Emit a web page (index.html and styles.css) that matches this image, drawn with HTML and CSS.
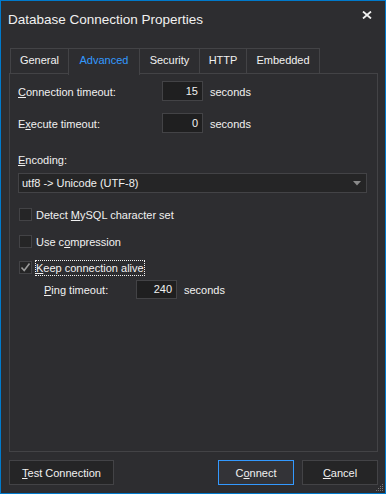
FILE: index.html
```html
<!DOCTYPE html>
<html>
    <head>
        <link rel="stylesheet" href="styles.css">
    </head>
    <body>
        <div class="window">
            <div class="title-bar">
                <span class="title">Database Connection Properties</span>
                <svg class="close" width="10" height="8" viewBox="0 0 10 8">
                    <path d="M1 0.5 L9 7.5 M9 0.5 L1 7.5" stroke="#f1f1f1" stroke-width="1.8" fill="none"/>
                </svg>
            </div>

            <div class="tabs">
                <div class="tab tab-general">General</div>
                <div class="tab tab-advanced active">Advanced</div>
                <div class="tab tab-security">Security</div>
                <div class="tab tab-http">HTTP</div>
                <div class="tab tab-embedded">Embedded</div>
            </div>

            <div class="panel">
                <div class="field-row first-row">
                    <label class="field-label"><u>C</u>onnection timeout:</label>
                    <div class="num-input">15</div>
                    <span class="unit">seconds</span>
                </div>

                <div class="field-row second-row">
                    <label class="field-label">E<u>x</u>ecute timeout:</label>
                    <div class="num-input">0</div>
                    <span class="unit">seconds</span>
                </div>

                <label class="encoding-label"><u>E</u>ncoding:</label>
                <div class="select">
                    <span>utf8 -&gt; Unicode (UTF-8)</span>
                    <svg width="8" height="5" viewBox="0 0 8 5">
                        <path d="M0 0 L8 0 L4 4.5 Z" fill="#8a8a8a"/>
                    </svg>
                </div>

                <div class="check-row check-detect">
                    <span class="checkbox"></span>
                    <span class="check-text">Detect <u>M</u>ySQL character set</span>
                </div>

                <div class="check-row check-compress">
                    <span class="checkbox"></span>
                    <span class="check-text">Use c<u>o</u>mpression</span>
                </div>

                <div class="check-row check-alive">
                    <span class="checkbox">
                        <svg width="11" height="11" viewBox="0 0 11 11">
                            <path d="M1.5 5.5 L4.2 8.5 L9.5 1.5" stroke="#9a9a9a" stroke-width="1.6" fill="none"/>
                        </svg>
                    </span>
                    <span class="check-text focused"><u>K</u>eep connection alive</span>
                </div>

                <div class="field-row ping-row">
                    <label class="field-label ping-label"><u>P</u>ing timeout:</label>
                    <div class="num-input">240</div>
                    <span class="unit">seconds</span>
                </div>
            </div>

            <div class="button-row">
                <button class="btn btn-test"><u>T</u>est Connection</button>
                <div class="spacer"></div>
                <button class="btn btn-connect">C<u>o</u>nnect</button>
                <button class="btn btn-cancel"><u>C</u>ancel</button>
            </div>

            <svg class="grip" width="8" height="8" viewBox="0 0 8 8">
                <rect x="6" y="0" width="1" height="1" fill="#777"/>
                <rect x="4" y="2" width="1" height="1" fill="#777"/>
                <rect x="6" y="2" width="1" height="1" fill="#777"/>
                <rect x="2" y="4" width="1" height="1" fill="#777"/>
                <rect x="4" y="4" width="1" height="1" fill="#777"/>
                <rect x="6" y="4" width="1" height="1" fill="#777"/>
                <rect x="0" y="6" width="1" height="1" fill="#777"/>
                <rect x="2" y="6" width="1" height="1" fill="#777"/>
                <rect x="4" y="6" width="1" height="1" fill="#777"/>
                <rect x="6" y="6" width="1" height="1" fill="#777"/>
            </svg>
        </div>
    </body>
</html>
```

FILE: styles.css
```css
body {
    margin: 0;
    font-family: "Liberation Sans", Arial, sans-serif;
    font-size: 11px;
    color: #f1f1f1;
    background-color: #2d2d30;
}

.window {
    position: relative;
    width: 386px;
    height: 494px;
    box-sizing: border-box;
    border: 1px solid #007acc;
    background-color: #2d2d30;
    display: flex;
    flex-direction: column;
}

.title-bar {
    height: 47px;
    display: flex;
    align-items: flex-start;
    justify-content: space-between;
    padding-left: 7px;
    padding-right: 13px;
}

.title {
    font-size: 13.5px;
    margin-top: 10px;
    line-height: 18px;
}

.close {
    margin-top: 10px;
}

.tabs {
    display: flex;
    height: 25px;
    margin-left: 9px;
}

.tab {
    position: relative;
    box-sizing: border-box;
    height: 26px;
    margin-left: -1px;
    border: 1px solid #434346;
    border-bottom: none;
    text-align: center;
    line-height: 22px;
}

.tab-general {
    margin-left: 0;
    width: 59px;
}

.tab-advanced {
    width: 72px;
}

.tab-security {
    width: 61px;
}

.tab-http {
    width: 48px;
}

.tab-embedded {
    width: 74px;
}

.tab.active {
    color: #3399ff;
    background-color: #2d2d30;
    height: 27px;
    z-index: 1;
}

.panel {
    height: 379px;
    box-sizing: border-box;
    margin-left: 8px;
    width: 369px;
    border: 1px solid #434346;
    padding: 7px 0 0 8px;
}

.field-row {
    display: flex;
    align-items: center;
    height: 20px;
}

.second-row {
    margin-top: 12px;
}

.field-label {
    width: 144px;
    padding-top: 1px;
}

.num-input {
    box-sizing: border-box;
    width: 41px;
    height: 20px;
    background-color: #1f1f20;
    border: 1px solid #434346;
    text-align: right;
    padding-right: 4px;
    line-height: 18px;
}

.unit {
    margin-left: 7px;
    padding-top: 1px;
}

.encoding-label {
    display: block;
    margin-top: 20px;
    line-height: 15px;
}

.select {
    box-sizing: border-box;
    margin-top: 5px;
    width: 349px;
    height: 20px;
    background-color: #252526;
    border: 1px solid #434346;
    display: flex;
    align-items: center;
    justify-content: space-between;
    padding: 0 5px 0 3px;
}

.check-row {
    display: flex;
    align-items: center;
    height: 15px;
    margin-left: 1px;
}

.check-detect {
    margin-top: 14px;
}

.check-compress {
    margin-top: 12px;
}

.check-alive {
    margin-top: 11px;
}

.checkbox {
    box-sizing: border-box;
    width: 13px;
    height: 13px;
    background-color: #252526;
    border: 1px solid #434346;
    display: flex;
    align-items: center;
    justify-content: center;
}

.check-text {
    margin-left: 3px;
    line-height: 13px;
    border: 1px solid transparent;
    padding-top: 1px;
}

.check-text.focused {
    border: 1px dotted #f1f1f1;
}

.ping-row {
    margin-top: 5px;
    height: 19px;
}

.ping-label {
    width: 92px;
    padding-left: 26px;
}

.ping-row .num-input {
    height: 19px;
    line-height: 17px;
}

.button-row {
    display: flex;
    margin-top: 8px;
    margin-left: 8px;
    margin-right: 7px;
    gap: 8px;
}

.spacer {
    flex: 1;
}

.btn {
    height: 25px;
    box-sizing: border-box;
    font-family: "Liberation Sans", Arial, sans-serif;
    font-size: 11px;
    color: #f1f1f1;
    background-color: #252526;
    border: 1px solid #434346;
    padding: 0;
}

.btn-test {
    width: 105px;
}

.btn-connect {
    width: 76px;
    background-color: #333337;
    border-color: #3399ff;
}

.btn-cancel {
    width: 76px;
}

.grip {
    position: absolute;
    right: 1px;
    bottom: 1px;
}
```
